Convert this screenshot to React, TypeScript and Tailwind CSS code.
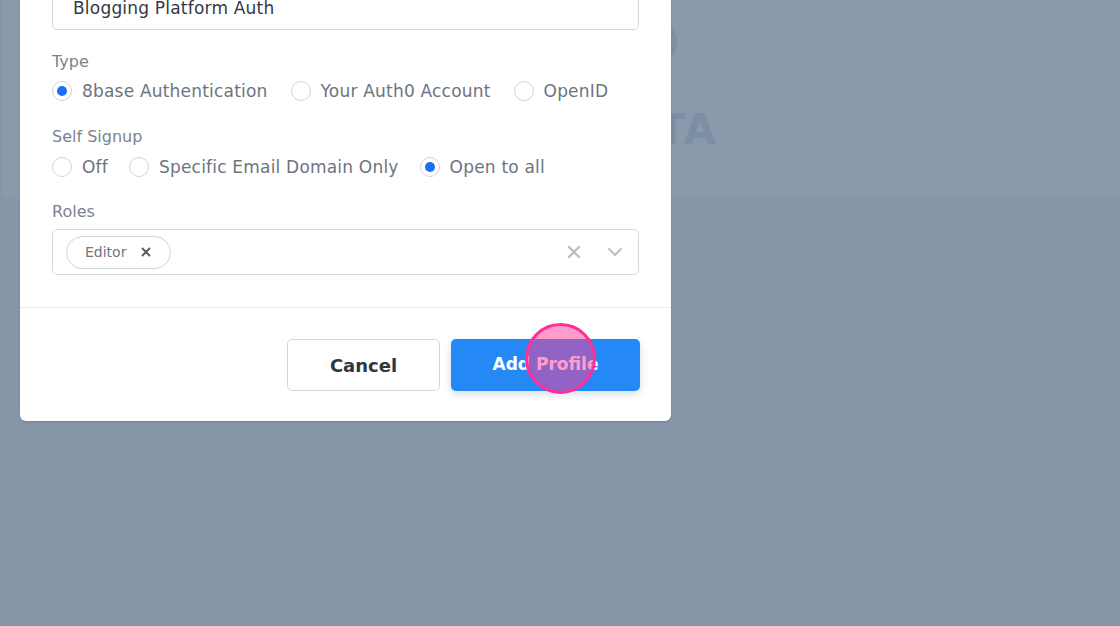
import React from "react";

const font = { fontFamily: "'DejaVu Sans', 'Noto Sans', sans-serif" };

const Radio = ({ label, checked }: { label: string; checked?: boolean }) => (
  <label className="flex items-center gap-[10px]">
    <span className="flex h-5 w-5 items-center justify-center rounded-full border border-[#cfd5dd] bg-white">
      {checked && <span className="h-[10px] w-[10px] rounded-full bg-[#1a6ff2]" />}
    </span>
    <span className="text-[17px] leading-5 tracking-[0.2px] text-[#6d7480]">{label}</span>
  </label>
);

const Field = ({ label, className, children }: { label: string; className?: string; children: React.ReactNode }) => (
  <div className={className}>
    <div className="h-5 text-[16px] leading-5 text-[#7b838f]">{label}</div>
    {children}
  </div>
);

export default function App() {
  return (
    <div className="relative h-[626px] w-[1120px] overflow-hidden bg-[#8696a8]" style={font}>
      {/* page behind the overlay */}
      <div className="ml-[2px] h-[198px] rounded-bl-[8px] bg-[#8b9aab]">
        <div className="flex w-[715px] flex-col items-end">
          <div className="mr-[40px] mt-[19px] h-[46px] w-[46px] rounded-full bg-[#7f90a4]" />
          <div className="mt-[40px] text-[42px] font-semibold leading-[50px] tracking-[1px] text-[#7c8ea3]">
            NO DATA
          </div>
        </div>
      </div>

      {/* modal */}
      <div className="absolute left-[20px] top-[-66px] w-[651px] rounded-[6px] bg-white shadow-sm">
        <div className="px-[32px] pb-[32px] pt-[20px]">
          <Field label="Name">
            <div className="mt-[9px] flex h-[47px] items-center rounded-[5px] border border-[#d3d9e0] px-[20px] pt-[4px] text-[17px] tracking-[0.2px] text-[#323a45]">
              Blogging Platform Auth
            </div>
          </Field>

          <Field label="Type" className="mt-[22px]">
            <div className="mt-[9px] flex gap-[23px]">
              <Radio label="8base Authentication" checked />
              <Radio label="Your Auth0 Account" />
              <Radio label="OpenID" />
            </div>
          </Field>

          <Field label="Self Signup" className="mt-[26px]">
            <div className="mt-[10px] flex gap-[21px]">
              <Radio label="Off" />
              <Radio label="Specific Email Domain Only" />
              <Radio label="Open to all" checked />
            </div>
          </Field>

          <Field label="Roles" className="mt-[25px]">
            <div className="mt-[7px] flex h-[46px] items-center rounded-[5px] border border-[#d3d9e0] pl-[13px] pr-[15px]">
              <div className="flex h-[33px] items-center gap-[15px] rounded-full border border-[#cdd3db] pl-[18px] pr-[19px]">
                <span className="text-[14px] text-[#6f7784]">Editor</span>
                <svg width="10" height="10" viewBox="0 0 10 10">
                  <path d="M1.5 1.5l7 7M8.5 1.5l-7 7" stroke="#59626e" strokeWidth="2" strokeLinecap="round" />
                </svg>
              </div>
              <div className="flex-1" />
              <svg width="14" height="14" viewBox="0 0 14 14" className="mr-[26px]">
                <path d="M2 2l10 10M12 2L2 12" stroke="#b9bfc7" strokeWidth="2.4" strokeLinecap="round" />
              </svg>
              <svg width="16" height="10" viewBox="0 0 16 10">
                <path d="M2 2l6 6 6-6" fill="none" stroke="#b9bfc7" strokeWidth="2" strokeLinecap="round" strokeLinejoin="round" />
              </svg>
            </div>
          </Field>
        </div>

        <div className="h-px bg-[#e9edf1]" />

        <div className="flex justify-end gap-[11px] px-[31px] pb-[30px] pt-[31px]">
          <button className="h-[52px] w-[153px] rounded-[5px] border border-[#d3d9e0] bg-white text-[18px] font-bold text-[#2f3742]">
            Cancel
          </button>
          <button className="relative h-[52px] w-[189px] rounded-[5px] bg-[#2589f5] text-[17px] font-bold text-white shadow-[0_3px_8px_rgba(30,60,100,0.18)]">
            Add Profile
            {/* click indicator */}
            <span className="absolute left-[74px] top-[-16px] h-[71px] w-[71px] rounded-full border-[3px] border-[#ff2f96] bg-[rgba(255,60,150,0.5)]" />
          </button>
        </div>
      </div>
    </div>
  );
}
